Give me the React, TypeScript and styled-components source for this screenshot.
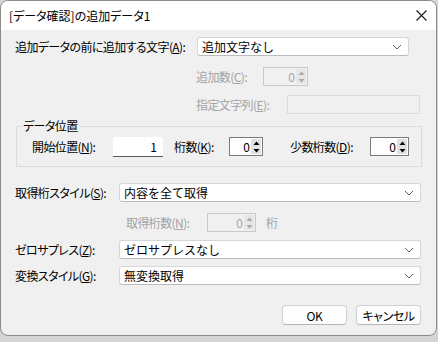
import styled, { createGlobalStyle } from "styled-components";

const GlobalStyle = createGlobalStyle`
  html, body {
    margin: 0;
    padding: 0;
    background: #d4d4d4;
  }
  body {
    font-family: "Noto Sans CJK JP", "Noto Sans", sans-serif;
    font-size: 12px;
    color: #000;
  }
`

const Dialog = styled.div`
  width: 437px;
  height: 336px;
  box-sizing: border-box;
  border: 1px solid #8c8c8c;
  border-radius: 8px;
  overflow: hidden;
  background: #f0f0f0;
  display: flex;
  flex-direction: column;
`

const TitleBar = styled.div`
  height: 29px;
  flex: none;
  background: #fff;
  display: flex;
  align-items: center;
  justify-content: space-between;
  padding: 0 9px 0 8px;
  font-size: 12px;
  font-feature-settings: "palt";
`

const Body = styled.div`
  padding: 7px 14px 0 14px;
  display: flex;
  flex-direction: column;
`

const Row = styled.div<{ $top: number; $indent?: number }>`
  display: flex;
  align-items: center;
  height: 19px;
  margin-top: ${p => p.$top}px;
  padding-left: ${p => p.$indent ?? 0}px;
`

const Label = styled.span<{ $w: number; $gap?: number; $disabled?: boolean }>`
  flex: none;
  width: ${p => p.$w}px;
  margin-left: ${p => p.$gap ?? 0}px;
  white-space: nowrap;
  font-feature-settings: "palt";
  letter-spacing: -0.6px;
  color: ${p => (p.$disabled ? "#a3a3a3" : "#000")};
`

const Combo = styled.div<{ $w: number }>`
  width: ${p => p.$w}px;
  height: 19px;
  box-sizing: border-box;
  background: #fff;
  border: 1px solid #d6d6d6;
  border-bottom-color: #bcbcbc;
  border-radius: 3px;
  display: flex;
  align-items: center;
  justify-content: space-between;
  padding: 0 6px 0 4px;
  font-size: 12px;
`

const Spinner = styled.div<{ $w: number; $disabled?: boolean }>`
  width: ${p => p.$w}px;
  height: 19px;
  flex: none;
  box-sizing: border-box;
  border: 1px solid ${p => (p.$disabled ? "#c9c9c9" : "#7a7a7a")};
  background: ${p => (p.$disabled ? "#f0f0f0" : "#fff")};
  display: flex;
  color: ${p => (p.$disabled ? "#a3a3a3" : "#000")};
`

const SpinValue = styled.div`
  flex: 1;
  text-align: right;
  padding-right: 1px;
  line-height: 17px;
`

const SpinArrows = styled.div<{ $disabled?: boolean }>`
  width: 10px;
  margin: 1px 1px 1px 0;
  display: flex;
  flex-direction: column;
  background: ${p => (p.$disabled ? "#e6e6e6" : "#e1e1e1")};
  gap: 1px;
`

const SpinHalf = styled.div`
  flex: 1;
  display: flex;
  align-items: center;
  justify-content: center;
  background: inherit;
`

const TextBox = styled.div<{ $w: number }>`
  width: ${p => p.$w}px;
  height: 19px;
  box-sizing: border-box;
  border: 1px solid #dcdcdc;
  background: #f0f0f0;
`

const Input = styled.div<{ $w: number }>`
  width: ${p => p.$w}px;
  height: 20px;
  flex: none;
  box-sizing: border-box;
  background: #fff;
  border-bottom: 1px solid #5a5a5a;
  border-radius: 3px 3px 0 0;
  text-align: right;
  padding-right: 6px;
  line-height: 19px;
`

const Group = styled.fieldset`
  margin: 5px 0 0 1px;
  padding: 0 0 0 15px;
  width: 406px;
  height: 48px;
  box-sizing: border-box;
  border: 1px solid #dcdcdc;
  min-width: 0;
`

const Legend = styled.legend`
  padding: 0 1px;
  margin-left: -10px;
  line-height: 14px;
  font-feature-settings: "palt";
  letter-spacing: -0.6px;
`

const Footer = styled.div`
  display: flex;
  justify-content: flex-end;
  gap: 9px;
  margin-top: 20px;
  padding-right: 1px;
`

const Button = styled.button`
  width: 65px;
  height: 20px;
  box-sizing: border-box;
  background: #fdfdfd;
  border: 1px solid #d0d0d0;
  border-bottom-color: #b5b5b5;
  border-radius: 4px;
  font-family: inherit;
  font-size: 12px;
  font-feature-settings: "palt";
  letter-spacing: -0.4px;
  padding: 0;
  color: #000;
`

const Unit = styled.span`
  margin-left: 10px;
  color: #a3a3a3;
`

const Chevron = () => (
  <svg width="10" height="6" viewBox="0 0 10 6">
    <path d="M1 1l4 4 4-4" fill="none" stroke="#606060" strokeWidth="1" />
  </svg>
)

const Arrow = ({ up, color }: { up?: boolean; color: string }) => (
  <svg width="7" height="4" viewBox="0 0 7 4">
    <path d={up ? "M0.5 4L3.5 0.5 6.5 4Z" : "M0.5 0L3.5 3.5 6.5 0Z"} fill={color} />
  </svg>
)

const Spin = ({ w, value, disabled }: { w: number; value: string; disabled?: boolean }) => {
  const c = disabled ? "#a8a8a8" : "#000"
  return (
    <Spinner $w={w} $disabled={disabled}>
      <SpinValue>{value}</SpinValue>
      <SpinArrows $disabled={disabled}>
        <SpinHalf><Arrow up color={c}/></SpinHalf>
        <SpinHalf><Arrow color={c}/></SpinHalf>
      </SpinArrows>
    </Spinner>
  )
}

const App = () => (
  <>
    <GlobalStyle/>
    <Dialog>
      <TitleBar>
        <span>[データ確認]の追加データ1</span>
        <svg width="11" height="11" viewBox="0 0 11 11">
          <path d="M0.5 0.5l10 10M10.5 0.5l-10 10" stroke="#1a1a1a" strokeWidth="1.1"/>
        </svg>
      </TitleBar>
      <Body>
        <Row $top={0}>
          <Label $w={182}>追加データの前に追加する文字(<u>A</u>):</Label>
          <Combo $w={212}>追加文字なし<Chevron/></Combo>
        </Row>
        <Row $top={11} $indent={181}>
          <Label $w={67} $disabled>追加数(<u>C</u>):</Label>
          <Spin w={45} value="0" disabled/>
        </Row>
        <Row $top={9} $indent={181}>
          <Label $w={91} $disabled>指定文字列(<u>E</u>):</Label>
          <TextBox $w={133}/>
        </Row>
        <Group>
          <Legend>データ位置</Legend>
          <Row $top={4}>
            <Label $w={81}>開始位置(<u>N</u>):</Label>
            <Input $w={50}>1</Input>
            <Label $w={55} $gap={11}>桁数(<u>K</u>):</Label>
            <Spin w={34} value="0"/>
            <Label $w={80} $gap={27}>少数桁数(<u>D</u>):</Label>
            <Spin w={39} value="0"/>
          </Row>
        </Group>
        <Row $top={16}>
          <Label $w={104}>取得桁スタイル(<u>S</u>):</Label>
          <Combo $w={302}>内容を全て取得<Chevron/></Combo>
        </Row>
        <Row $top={11} $indent={111}>
          <Label $w={81} $disabled>取得桁数(<u>N</u>):</Label>
          <Spin w={49} value="0" disabled/>
          <Unit>桁</Unit>
        </Row>
        <Row $top={8}>
          <Label $w={104}>ゼロサプレス(<u>Z</u>):</Label>
          <Combo $w={302}>ゼロサプレスなし<Chevron/></Combo>
        </Row>
        <Row $top={7}>
          <Label $w={104}>変換スタイル(<u>G</u>):</Label>
          <Combo $w={302}>無変換取得<Chevron/></Combo>
        </Row>
        <Footer>
          <Button>OK</Button>
          <Button>キャンセル</Button>
        </Footer>
      </Body>
    </Dialog>
  </>
)

export default App
